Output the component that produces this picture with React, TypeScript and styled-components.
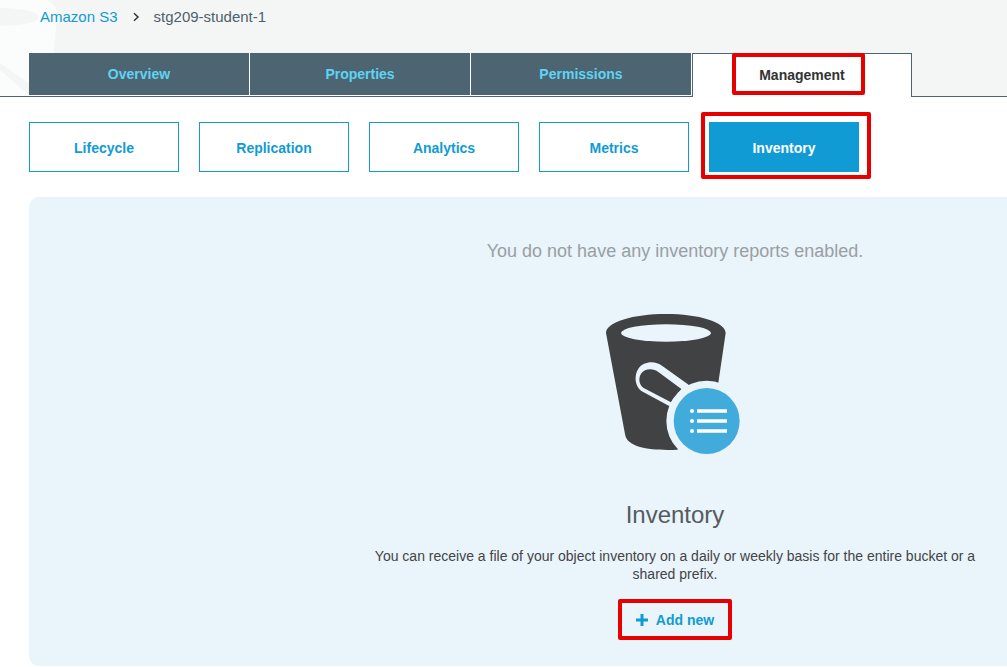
import React from "react";
import styled, { createGlobalStyle, css } from "styled-components";

const GlobalStyle = createGlobalStyle`
  *, *::before, *::after { box-sizing: border-box; }
  body {
    margin: 0;
    background: #fff;
    color: #444;
    font-family: "Liberation Sans", Helvetica, Arial, sans-serif;
    font-size: 14px;
    line-height: 18px;
  }
  button { font: inherit; cursor: pointer; }
`;

const Header = styled.header`
  position: relative;
  padding: 8px 0 0 29px;
  background: #f4f6f6;
  border-bottom: 1px solid #4d6572;
`;

const Watermark = styled.svg`
  position: absolute;
  left: 0;
  top: 0;
  width: 60px;
  height: 96px;
`;

const Breadcrumb = styled.nav`
  position: relative;
  display: flex;
  align-items: center;
  gap: 14px;
  padding-left: 11px;
  color: #4d5f6b;
  font-size: 15px;
`;

const CrumbLink = styled.a`
  color: #119bd4;
  text-decoration: none;
`;

const Tabs = styled.div`
  position: relative;
  display: flex;
  gap: 1px;
  margin: 27px 0 -1px;
`;

const Tab = styled.button<{ $active?: boolean }>`
  width: 220px;
  height: 42px;
  padding: 0;
  border: 0;
  background: #4d6572;
  color: #5ed4f3;
  font-weight: bold;
  box-shadow: 0 1px 0 #fff, 1px 0 0 #fff;
  ${(p) =>
    p.$active &&
    css`
      height: 44px;
      padding-bottom: 2px;
      border: 1px solid #4d6572;
      border-bottom: 0;
      background: #fff;
      color: #333;
      box-shadow: none;
    `}
`;

const Highlight = styled.span<{ $inset: string }>`
  position: relative;
  display: inline-block;
  &::after {
    content: "";
    position: absolute;
    inset: ${(p) => p.$inset};
    border: 4px solid #e60000;
    border-radius: 2px;
    pointer-events: none;
  }
`;

const Sections = styled.nav`
  display: flex;
  gap: 20px;
  padding: 25px 29px;
`;

const SectionButton = styled.button<{ $active?: boolean }>`
  width: 150px;
  height: 50px;
  padding: 2px 0 0;
  border: 1px solid #119bd4;
  background: ${(p) => (p.$active ? "#119bd4" : "#fff")};
  color: ${(p) => (p.$active ? "#fff" : "#119bd4")};
  font-weight: bold;
`;

const Panel = styled.main`
  display: flex;
  flex-direction: column;
  align-items: center;
  margin-left: 29px;
  padding: 42px 0 27px 314px;
  border-radius: 10px 0 0 10px;
  background: #e9f4fb;
  text-align: center;
`;

const Notice = styled.p`
  margin: 0;
  color: #999fa2;
  font-size: 18px;
  line-height: 24px;
`;

const BucketIcon = styled.svg`
  display: block;
  width: 170px;
  height: 170px;
  margin: 37px 0 31px;
`;

const Title = styled.h1`
  margin: 0;
  color: #555b5e;
  font-size: 24px;
  font-weight: normal;
  line-height: 28px;
`;

const Description = styled.p`
  max-width: 620px;
  margin: 18px 0;
  color: #444;
`;

const AddButton = styled.button`
  display: flex;
  align-items: center;
  gap: 8px;
  padding: 10px 0;
  border: 0;
  background: none;
  color: #119bd4;
  font-weight: bold;
`;

export default function App() {
  return (
    <>
      <GlobalStyle />
      <Header>
        <Watermark viewBox="0 0 60 96" aria-hidden="true">
          <path d="M0 0H47Q58 6 57 16L50 96H0Z" fill="#fbfcfc" />
          <path d="M0 8Q38 9 39 17Q38 25 0 26Z" fill="#f4f6f6" />
          <path d="M0 63L30 84V96L0 70Z" fill="#f4f6f6" />
        </Watermark>
        <Breadcrumb aria-label="Breadcrumb">
          <CrumbLink href="#">Amazon S3</CrumbLink>
          <svg width="8" height="10" viewBox="0 0 8 10" fill="none" stroke="#333" strokeWidth="1.5" aria-hidden="true">
            <path d="M2 1.2L6 5L2 8.8" />
          </svg>
          <span>stg209-student-1</span>
        </Breadcrumb>
        <Tabs role="tablist">
          <Tab role="tab">Overview</Tab>
          <Tab role="tab">Properties</Tab>
          <Tab role="tab">Permissions</Tab>
          <Tab role="tab" aria-selected="true" $active>
            <Highlight $inset="-13px -20px -11px -27px">Management</Highlight>
          </Tab>
        </Tabs>
      </Header>
      <Sections aria-label="Management sections">
        <SectionButton>Lifecycle</SectionButton>
        <SectionButton>Replication</SectionButton>
        <SectionButton>Analytics</SectionButton>
        <SectionButton>Metrics</SectionButton>
        <Highlight $inset="-10px -12px -7px -8px">
          <SectionButton $active>Inventory</SectionButton>
        </Highlight>
      </Sections>
      <Panel>
        <Notice>You do not have any inventory reports enabled.</Notice>
        <BucketIcon viewBox="0 0 510 510" aria-hidden="true">
          <path d="M48 99C48 66 130 42 228 42S407 66 407 99L370 350L262 449C192 452 110 446 105 402Z" fill="#404244" />
          <ellipse cx="228" cy="99" rx="135" ry="26" fill="#e9f4fb" />
          <path d="M300 257L216 197C196 181 160 183 145 206C131 228 135 258 154 273L236 317L260 320L290 275Z" fill="#e9f4fb" />
          <path d="M274 267L205 216C190 204 165 204 153 221C144 236 148 255 161 264L243 307Z" fill="#404244" />
          <circle cx="350" cy="363" r="121" fill="#e9f4fb" />
          <circle cx="350" cy="363" r="99" fill="#41abdc" />
          <g fill="#fff">
            <circle cx="306" cy="333" r="6" />
            <circle cx="306" cy="363" r="6" />
            <circle cx="306" cy="393" r="6" />
            <path d="M321 328h90v10h-90zM321 358h90v10h-90zM321 388h90v10h-90z" />
          </g>
        </BucketIcon>
        <Title>Inventory</Title>
        <Description>
          You can receive a file of your object inventory on a daily or weekly basis for the entire bucket or a shared
          prefix.
        </Description>
        <Highlight $inset="-2px -18px -1px -18px">
          <AddButton>
            <svg width="12" height="12" viewBox="0 0 12 12" fill="currentColor" aria-hidden="true">
              <path d="M4.5 0h3v4.5H12v3H7.5V12h-3V7.5H0v-3h4.5z" />
            </svg>
            Add new
          </AddButton>
        </Highlight>
      </Panel>
    </>
  );
}
